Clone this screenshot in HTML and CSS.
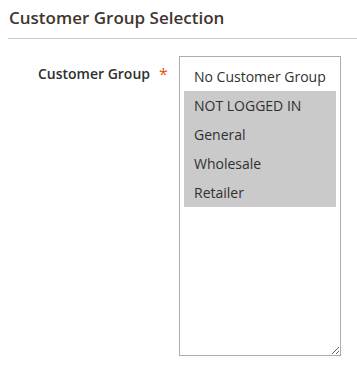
FILE: index.html
```html
<!DOCTYPE html>
<html>
<head>
<meta charset="utf-8">
<link rel="stylesheet" href="styles.css">
</head>
<body>
<div class="page">
  <h2 class="section-title">Customer Group Selection</h2>
  <div class="field">
    <label class="field-label">Customer Group<span class="req">*</span></label>
    <div class="listbox" role="listbox" aria-multiselectable="true">
      <div class="opt">No Customer Group</div>
      <div class="opt sel">NOT LOGGED IN</div>
      <div class="opt sel">General</div>
      <div class="opt sel">Wholesale</div>
      <div class="opt sel">Retailer</div>
    </div>
  </div>
</div>
</body>
</html>
```
FILE: styles.css
```css
html, body {
  margin: 0;
  padding: 0;
  background: #fff;
}
.page {
  width: 357px;
  height: 373px;
  padding-left: 8px;
  box-sizing: border-box;
  font-family: "Open Sans", "Liberation Sans", sans-serif;
  color: #303030;
}
.section-title {
  margin: 0;
  padding: 6px 0 0 1px;
  box-sizing: border-box;
  height: 39px;
  font-size: 17px;
  font-weight: 600;
  line-height: 24px;
  color: #41362f;
  border-bottom: 1px solid #cccccc;
}
.field {
  display: flex;
  margin-top: 17px;
}
.field-label {
  width: 162px;
  flex: none;
  box-sizing: border-box;
  display: flex;
  justify-content: flex-end;
  font-size: 14px;
  font-weight: 600;
  line-height: 20px;
  padding-top: 8px;
}
.req {
  color: #eb5202;
  font-weight: 400;
  font-size: 16px;
  margin-left: 9px;
  width: 11px;
}
.listbox {
  margin-left: 9px;
  width: 162px;
  height: 300px;
  flex: none;
  box-sizing: border-box;
  border: 1px solid #adadad;
  padding: 5px 4px 4px;
  overflow: auto;
  resize: vertical;
  font-size: 14px;
  color: #303030;
}
.opt {
  height: 29px;
  line-height: 29px;
  padding-left: 10px;
  white-space: nowrap;
}
.opt.sel {
  background: #cacaca;
}
```
